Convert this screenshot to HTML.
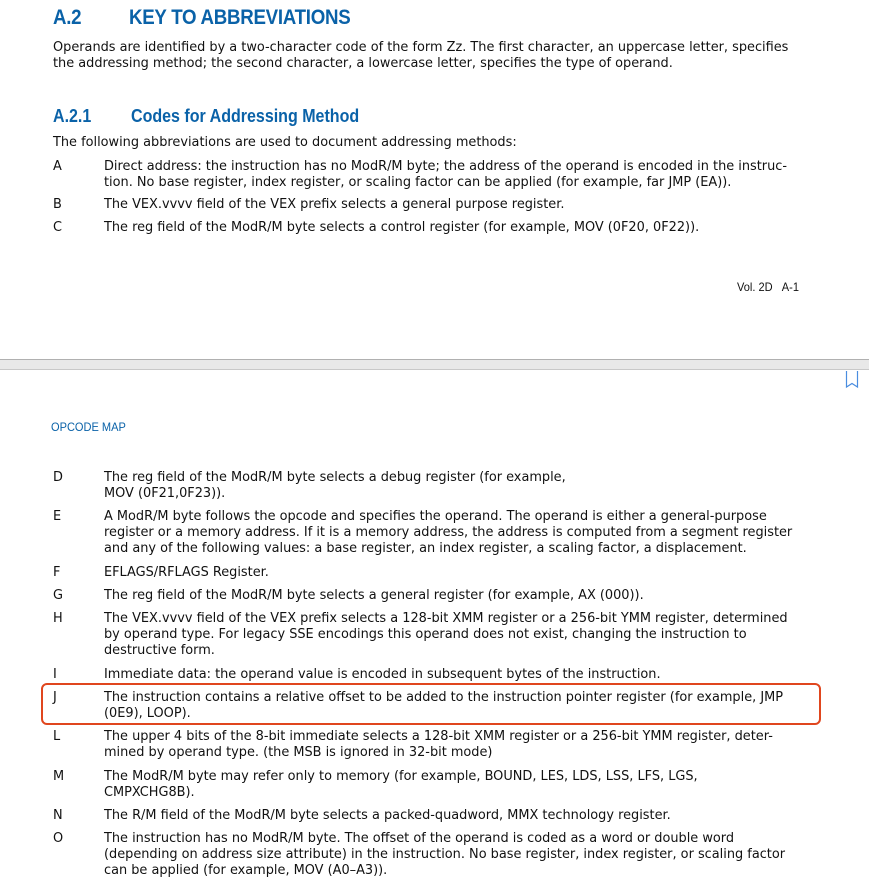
<!DOCTYPE html>
<html><head><meta charset="utf-8"><style>
body{margin:0;width:869px;height:867px;background:#fff;position:relative;overflow:hidden;font-family:"DejaVu Sans","Liberation Sans",sans-serif;color:#111}
.t{position:absolute;white-space:nowrap;font-size:12.9px;line-height:16px;margin-top:1px}
.h{position:absolute;white-space:nowrap;font-family:"Liberation Sans",sans-serif;font-weight:bold;color:#0a62a8;transform:scaleX(0.89);transform-origin:0 0}
</style></head><body>
<div class="h" style="left:53px;top:6px;font-size:21px;letter-spacing:-0.3px">A.2</div>
<div class="h" style="left:129px;top:6px;font-size:21px;letter-spacing:-0.3px">KEY TO ABBREVIATIONS</div>
<div class="t" style="left:53px;top:39px">Operands are identified by a two-character code of the form Zz. The first character, an uppercase letter, specifies</div>
<div class="t" style="left:53px;top:55px">the addressing method; the second character, a lowercase letter, specifies the type of operand.</div>
<div class="h" style="left:53px;top:106px;font-size:18px">A.2.1</div>
<div class="h" style="left:131px;top:106px;font-size:18px">Codes for Addressing Method</div>
<div class="t" style="left:53px;top:134px">The following abbreviations are used to document addressing methods:</div>
<div class="t" style="left:53px;top:158px">A</div>
<div class="t" style="left:104px;top:158px">Direct address: the instruction has no ModR/M byte; the address of the operand is encoded in the instruc-</div>
<div class="t" style="left:104px;top:174px">tion. No base register, index register, or scaling factor can be applied (for example, far JMP (EA)).</div>
<div class="t" style="left:53px;top:196px">B</div>
<div class="t" style="left:104px;top:196px">The VEX.vvvv field of the VEX prefix selects a general purpose register.</div>
<div class="t" style="left:53px;top:219px">C</div>
<div class="t" style="left:104px;top:219px">The reg field of the ModR/M byte selects a control register (for example, MOV (0F20, 0F22)).</div>
<div class="t" style="left:737px;top:278px;font-family:'Liberation Sans',sans-serif;font-size:12px;transform:scaleX(0.92);transform-origin:0 0">Vol. 2D&nbsp;&nbsp;&nbsp;A-1</div>
<div style="position:absolute;left:0;top:359px;width:869px;height:9px;background:#e8e8e8;border-top:1px solid #b0b0b0;border-bottom:1px solid #c8c8c8"></div>
<svg style="position:absolute;left:845px;top:371px" width="14" height="18"><path d="M1.5 0V16L7 12.5L12.5 16V0" fill="none" stroke="#4a8de0" stroke-width="1.2"/></svg>
<div class="t" style="left:51px;top:418px;font-family:'Liberation Sans',sans-serif;font-size:12px;color:#0a62a8;transform:scaleX(0.92);transform-origin:0 0">OPCODE MAP</div>
<div class="t" style="left:53px;top:469px">D</div>
<div class="t" style="left:104px;top:469px">The reg field of the ModR/M byte selects a debug register (for example,</div>
<div class="t" style="left:104px;top:485px">MOV (0F21,0F23)).</div>
<div class="t" style="left:53px;top:508px">E</div>
<div class="t" style="left:104px;top:508px">A ModR/M byte follows the opcode and specifies the operand. The operand is either a general-purpose</div>
<div class="t" style="left:104px;top:524px">register or a memory address. If it is a memory address, the address is computed from a segment register</div>
<div class="t" style="left:104px;top:540px">and any of the following values: a base register, an index register, a scaling factor, a displacement.</div>
<div class="t" style="left:53px;top:564px">F</div>
<div class="t" style="left:104px;top:564px">EFLAGS/RFLAGS Register.</div>
<div class="t" style="left:53px;top:587px">G</div>
<div class="t" style="left:104px;top:587px">The reg field of the ModR/M byte selects a general register (for example, AX (000)).</div>
<div class="t" style="left:53px;top:610px">H</div>
<div class="t" style="left:104px;top:610px">The VEX.vvvv field of the VEX prefix selects a 128-bit XMM register or a 256-bit YMM register, determined</div>
<div class="t" style="left:104px;top:626px">by operand type. For legacy SSE encodings this operand does not exist, changing the instruction to</div>
<div class="t" style="left:104px;top:642px">destructive form.</div>
<div class="t" style="left:53px;top:666px">I</div>
<div class="t" style="left:104px;top:666px">Immediate data: the operand value is encoded in subsequent bytes of the instruction.</div>
<div style="position:absolute;left:41px;top:683px;width:776px;height:38px;border:2px solid #e0461e;border-radius:6px"></div>
<div class="t" style="left:53px;top:689px">J</div>
<div class="t" style="left:104px;top:689px">The instruction contains a relative offset to be added to the instruction pointer register (for example, JMP</div>
<div class="t" style="left:104px;top:705px">(0E9), LOOP).</div>
<div class="t" style="left:53px;top:728px">L</div>
<div class="t" style="left:104px;top:728px">The upper 4 bits of the 8-bit immediate selects a 128-bit XMM register or a 256-bit YMM register, deter-</div>
<div class="t" style="left:104px;top:744px">mined by operand type. (the MSB is ignored in 32-bit mode)</div>
<div class="t" style="left:53px;top:768px">M</div>
<div class="t" style="left:104px;top:768px">The ModR/M byte may refer only to memory (for example, BOUND, LES, LDS, LSS, LFS, LGS,</div>
<div class="t" style="left:104px;top:784px">CMPXCHG8B).</div>
<div class="t" style="left:53px;top:807px">N</div>
<div class="t" style="left:104px;top:807px">The R/M field of the ModR/M byte selects a packed-quadword, MMX technology register.</div>
<div class="t" style="left:53px;top:830px">O</div>
<div class="t" style="left:104px;top:830px">The instruction has no ModR/M byte. The offset of the operand is coded as a word or double word</div>
<div class="t" style="left:104px;top:846px">(depending on address size attribute) in the instruction. No base register, index register, or scaling factor</div>
<div class="t" style="left:104px;top:862px">can be applied (for example, MOV (A0–A3)).</div>
</body></html>
